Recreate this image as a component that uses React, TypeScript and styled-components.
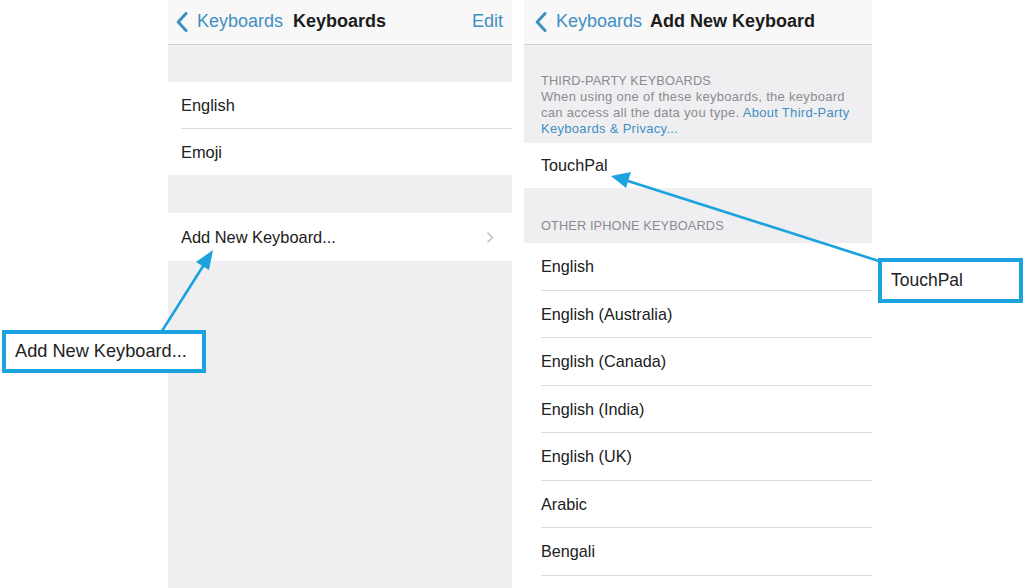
import React from "react";
import styled, { createGlobalStyle } from "styled-components";

const GlobalStyle = createGlobalStyle`
  html, body { margin: 0; padding: 0; background: #ffffff; }
  body { font-family: "Liberation Sans", Arial, sans-serif; -webkit-font-smoothing: antialiased; }
`;

const BLUE = "#3f8fc2";
const CALLOUT = "#1aa3df";

const Page = styled.div`
  position: relative;
  width: 1024px;
  height: 588px;
  overflow: hidden;
  display: flex;
  gap: 12px;
  padding-left: 168px;
  box-sizing: border-box;
  background: #ffffff;
`;

const Panel = styled.div<{ $w: number; $bg: string }>`
  width: ${(p) => p.$w}px;
  height: 588px;
  background: ${(p) => p.$bg};
  display: flex;
  flex-direction: column;
`;

const NavBar = styled.div<{ $pl: number; $gap: number }>`
  height: 43px;
  flex: none;
  background: #f8f8f8;
  border-bottom: 1px solid #d2d2d4;
  display: flex;
  align-items: center;
  padding: 0 9px 1px ${(p) => p.$pl}px;
  box-sizing: content-box;
  gap: ${(p) => p.$gap}px;
  font-size: 18px;
`;

const Back = styled.div`
  display: flex;
  align-items: center;
  gap: 9px;
  color: ${BLUE};
`;

const Title = styled.div`
  font-weight: bold;
  color: #1c1c1c;
`;

const Edit = styled.div`
  margin-left: auto;
  color: ${BLUE};
`;

const Band = styled.div<{ $h: number }>`
  height: ${(p) => p.$h}px;
  flex: none;
  background: #efeff1;
`;

const Group = styled.div`
  background: #ffffff;
  flex: none;
`;

const Row = styled.div<{ $h: number; $pl: number; $fs: number; $sep?: boolean }>`
  position: relative;
  height: ${(p) => p.$h}px;
  display: flex;
  align-items: center;
  padding: 0 18px 0 ${(p) => p.$pl}px;
  font-size: ${(p) => p.$fs}px;
  color: #202020;
  box-sizing: border-box;
  &::after {
    content: "";
    display: ${(p) => (p.$sep ? "block" : "none")};
    position: absolute;
    left: ${(p) => p.$pl}px;
    right: 0;
    bottom: 0;
    height: 1px;
    background: #dcdcde;
  }
`;

const Chevron = styled.span`
  margin-left: auto;
  display: flex;
`;

const Section = styled.div<{ $pt: number; $pb: number }>`
  background: #efeff1;
  padding: ${(p) => p.$pt}px 12px ${(p) => p.$pb}px 17px;
  font-size: 13px;
  letter-spacing: 0.3px;
  line-height: 16px;
  color: #8b8b90;
  flex: none;
`;

const SectionTitle = styled.div`
  font-size: 12.8px;
  letter-spacing: 0.1px;
`;

const Desc = styled.p`
  margin: 0;
`;

const Link = styled.span`
  color: ${BLUE};
`;

const Callout = styled.div<{ $l: number; $t: number; $w: number; $h: number; $pl: number }>`
  position: absolute;
  left: ${(p) => p.$l}px;
  top: ${(p) => p.$t}px;
  width: ${(p) => p.$w}px;
  height: ${(p) => p.$h}px;
  box-sizing: border-box;
  border: 4px solid ${CALLOUT};
  background: #ffffff;
  display: flex;
  align-items: center;
  padding-left: ${(p) => p.$pl}px;
  color: #222;
`;

const CalloutText = styled.span<{ $fs: number }>`
  font-size: ${(p) => p.$fs}px;
`;

const Overlay = styled.svg`
  position: absolute;
  left: 0;
  top: 0;
  pointer-events: none;
`;

const BackChevron = () => (
  <svg width="12" height="20" viewBox="0 0 12 20">
    <path d="M10 1.5 L2.2 10 L10 18.5" fill="none" stroke={BLUE} strokeWidth="3" strokeLinecap="round" strokeLinejoin="round" />
  </svg>
);

const Disclosure = () => (
  <svg width="8" height="13" viewBox="0 0 8 13">
    <path d="M1.5 1.5 L6.5 6.5 L1.5 11.5" fill="none" stroke="#c4c4c8" strokeWidth="1.6" />
  </svg>
);

const others = [
  "English",
  "English (Australia)",
  "English (Canada)",
  "English (India)",
  "English (UK)",
  "Arabic",
  "Bengali",
];

export default function App() {
  return (
    <>
      <GlobalStyle />
      <Page>
        <Panel $w={344} $bg="#efeff1">
          <NavBar $pl={8} $gap={10}>
            <Back>
              <BackChevron />
              <span>Keyboards</span>
            </Back>
            <Title>Keyboards</Title>
            <Edit>Edit</Edit>
          </NavBar>
          <Band $h={37} />
          <Group>
            <Row $h={47} $pl={13} $fs={16.4} $sep>English</Row>
            <Row $h={46} $pl={13} $fs={16.4}>Emoji</Row>
          </Group>
          <Band $h={38} />
          <Group>
            <Row $h={48} $pl={13} $fs={16.4}>
              Add New Keyboard...
              <Chevron>
                <Disclosure />
              </Chevron>
            </Row>
          </Group>
        </Panel>

        <Panel $w={348} $bg="#ffffff">
          <NavBar $pl={11} $gap={8}>
            <Back>
              <BackChevron />
              <span>Keyboards</span>
            </Back>
            <Title>Add New Keyboard</Title>
          </NavBar>
          <Section $pt={28} $pb={6}>
            <SectionTitle>THIRD-PARTY KEYBOARDS</SectionTitle>
            <Desc>
              When using one of these keyboards, the keyboard can access all the data you type.{" "}
              <Link>About Third-Party Keyboards &amp; Privacy...</Link>
            </Desc>
          </Section>
          <Group>
            <Row $h={45} $pl={17} $fs={16.2}>TouchPal</Row>
          </Group>
          <Section $pt={30} $pb={9}>
            <SectionTitle>OTHER IPHONE KEYBOARDS</SectionTitle>
          </Section>
          <Group>
            {others.map((k) => (
              <Row key={k} $h={47.5} $pl={17} $fs={16.2} $sep>
                {k}
              </Row>
            ))}
          </Group>
        </Panel>

        <Overlay width="1024" height="588" viewBox="0 0 1024 588">
          <line x1="162" y1="331" x2="205" y2="263" stroke={CALLOUT} strokeWidth="2.6" />
          <polygon points="213,250 196,262 209,270" fill={CALLOUT} />
          <line x1="882" y1="262" x2="628" y2="181" stroke={CALLOUT} strokeWidth="2.6" />
          <polygon points="611,176 631,172 626,188" fill={CALLOUT} />
        </Overlay>

        <Callout $l={2} $t={330} $w={204} $h={43} $pl={9}>
          <CalloutText $fs={18.2}>Add New Keyboard...</CalloutText>
        </Callout>
        <Callout $l={878} $t={258} $w={145} $h={45} $pl={9}>
          <CalloutText $fs={17.5}>TouchPal</CalloutText>
        </Callout>
      </Page>
    </>
  );
}
